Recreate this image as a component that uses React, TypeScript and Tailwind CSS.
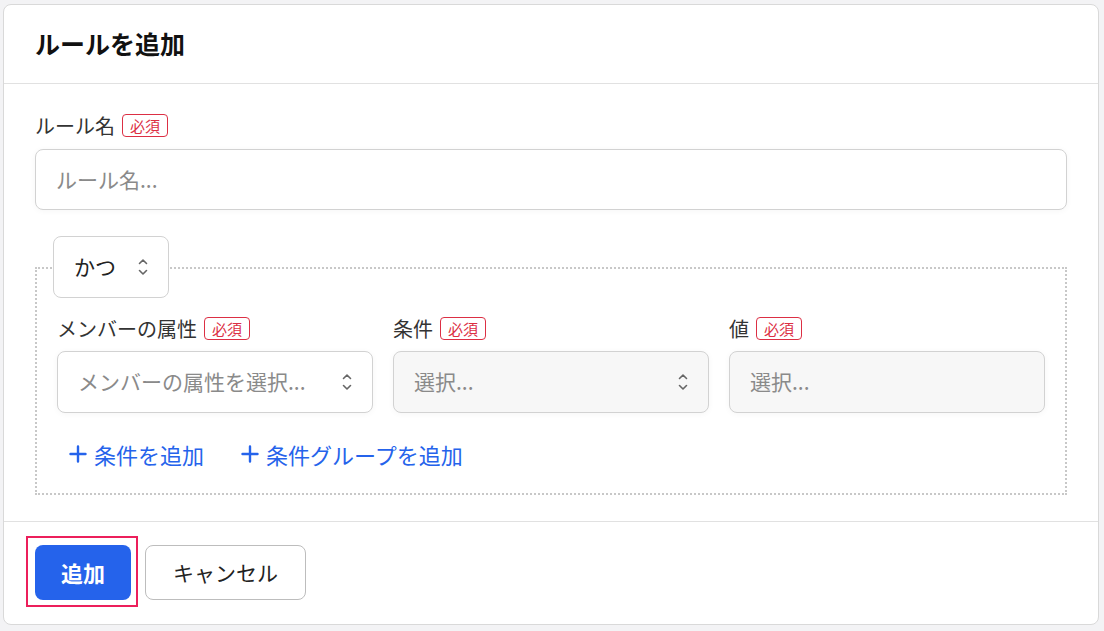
import type { ReactNode } from "react";

const font = { fontFamily: '"Noto Sans CJK JP", "Noto Sans", sans-serif' };

function UpDown({ className = "" }: { className?: string }) {
  return (
    <svg width="10" height="18" viewBox="0 0 10 18" fill="none" className={className}>
      <path d="M1.5 5.5 L5 2 L8.5 5.5" stroke="currentColor" strokeWidth="1.6" strokeLinecap="round" strokeLinejoin="round" />
      <path d="M1.5 12.5 L5 16 L8.5 12.5" stroke="currentColor" strokeWidth="1.6" strokeLinecap="round" strokeLinejoin="round" />
    </svg>
  );
}

function Plus() {
  return (
    <svg width="18" height="18" viewBox="0 0 18 18" fill="none" className="shrink-0">
      <path d="M9 1.5 V16.5 M1.5 9 H16.5" stroke="currentColor" strokeWidth="2.4" strokeLinecap="round" />
    </svg>
  );
}

function Required() {
  return (
    <span className="inline-flex h-[23px] items-center rounded-[4px] border-[1.5px] border-[#dc2f44] px-[7px] text-[15px] leading-none text-[#dc2f44]">
      必須
    </span>
  );
}

function FieldLabel({ children }: { children: ReactNode }) {
  return (
    <div className="flex h-[23px] items-center gap-[7px] text-[20px] leading-[23px] text-[#333]">
      <span>{children}</span>
      <Required />
    </div>
  );
}

function SelectBox({
  placeholder,
  disabled,
  chevron = true,
}: {
  placeholder: string;
  disabled?: boolean;
  chevron?: boolean;
}) {
  return (
    <div
      className={
        "flex h-[62px] items-center justify-between rounded-[8px] border border-[#d2d2d2] pl-5 pr-5 shadow-[0_1px_6px_rgba(0,0,0,0.04)] " +
        (disabled ? "bg-[#f7f7f7]" : "bg-white")
      }
    >
      <span className="truncate text-[21px] text-[#8a8a8a]">{placeholder}</span>
      {chevron && <UpDown className="shrink-0 text-[#666]" />}
    </div>
  );
}

export default function App() {
  return (
    <div className="min-h-[631px] bg-[#f3f3f5] pl-[3px] pt-[4px]" style={font}>
      <div className="flex w-[1096px] flex-col rounded-[8px] border border-[#d9d9d9] bg-white">
        <div className="flex h-[79px] items-center border-b border-[#e1e1e1] px-[31px]">
          <h1 className="text-[25px] font-bold text-[#111]">ルールを追加</h1>
        </div>

        <div className="flex flex-col px-[31px] pb-[26px] pt-[30px]">
          <FieldLabel>ルール名</FieldLabel>
          <div className="mt-3 flex h-[61px] items-center rounded-[8px] border border-[#d2d2d2] bg-white px-5 shadow-[0_1px_6px_rgba(0,0,0,0.04)]">
            <span className="text-[21px] text-[#8a8a8a]">ルール名...</span>
          </div>

          <div className="mt-[26px] flex flex-col">
            <div className="relative z-10 ml-[18px] flex h-[62px] w-[116px] items-center justify-between rounded-[8px] border border-[#d2d2d2] bg-white pl-5 pr-5">
              <span className="text-[21px] text-[#222]">かつ</span>
              <UpDown className="text-[#666]" />
            </div>
            <div className="-mt-[31px] flex flex-col border-2 border-dotted border-[#c8c8c8] px-5 pb-[26px] pt-[48px]">
              <div className="grid grid-cols-3 gap-5">
                <div className="flex flex-col gap-[11px]">
                  <FieldLabel>メンバーの属性</FieldLabel>
                  <SelectBox placeholder="メンバーの属性を選択..." />
                </div>
                <div className="flex flex-col gap-[11px]">
                  <FieldLabel>条件</FieldLabel>
                  <SelectBox placeholder="選択..." disabled />
                </div>
                <div className="flex flex-col gap-[11px]">
                  <FieldLabel>値</FieldLabel>
                  <SelectBox placeholder="選択..." disabled chevron={false} />
                </div>
              </div>
              <div className="mt-[28px] flex h-[26px] items-center gap-[37px] pl-[12px] text-[22px] text-[#2563eb]">
                <span className="flex items-center gap-[7px]">
                  <Plus />
                  条件を追加
                </span>
                <span className="flex items-center gap-[7px]">
                  <Plus />
                  条件グループを追加
                </span>
              </div>
            </div>
          </div>
        </div>

        <div className="flex items-center gap-[14px] border-t border-[#e1e1e1] px-[31px] pb-6 pt-[23px]">
          <div className="relative">
            <button className="h-[55px] w-[96px] rounded-[8px] bg-[#2563eb] text-[22px] font-bold text-white">
              追加
            </button>
            <span className="pointer-events-none absolute -bottom-[7px] -left-[9px] -right-[7px] -top-[9px] border-2 border-[#ec1f5b]" />
          </div>
          <button className="h-[55px] w-[161px] rounded-[8px] border border-[#bdbdbd] bg-white text-[21px] text-[#222]">
            キャンセル
          </button>
        </div>
      </div>
    </div>
  );
}
